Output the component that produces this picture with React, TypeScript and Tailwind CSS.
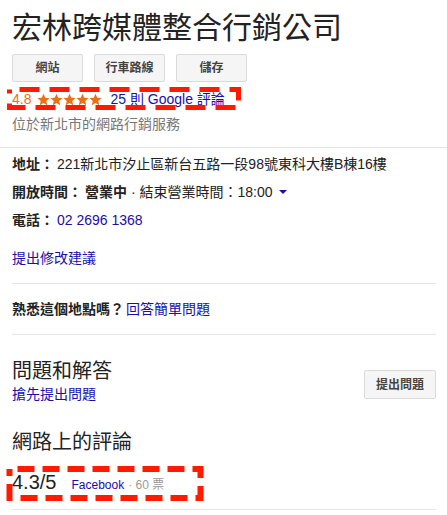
import React from "react";

const FONT = '"Liberation Sans", Arial, "Noto Sans CJK TC", sans-serif';

function Star() {
  return (
    <svg width="13" height="13" viewBox="0 0 24 24" className="inline-block">
      <path
        fill="#e7711b"
        d="M12 1.2l3.2 7.4 8 .7-6.1 5.3 1.8 7.9L12 18.4 5.1 22.5l1.8-7.9L.8 9.3l8-.7z"
      />
    </svg>
  );
}

function Btn({ label }: { label: string }) {
  return (
    <div className="flex h-[28px] w-[71px] items-center justify-center rounded-[2px] border border-[#dadada] bg-[#f5f5f5] text-[12px] font-bold text-[#444]">
      {label}
    </div>
  );
}

export default function App() {
  return (
    <div className="relative h-[515px] w-[447px] overflow-hidden bg-white text-[#222]" style={{ fontFamily: FONT }}>
      <div className="pl-[12px] pr-[11px]">
        {/* title */}
        <div className="mt-[8px] flex h-[40px] items-center text-[30px] leading-[30px] text-[#222]">
          宏林跨媒體整合行銷公司
        </div>
        {/* buttons */}
        <div className="mt-[6px] flex gap-[11px]">
          <Btn label="網站" />
          <Btn label="行車路線" />
          <Btn label="儲存" />
        </div>
        {/* rating */}
        <div className="mt-[7px] flex h-[20px] items-center text-[14px]">
          <span className="text-[#e7711b]">4.8</span>
          <span className="ml-[6px] flex">
            <Star />
            <Star />
            <Star />
            <Star />
            <Star />
          </span>
          <span className="ml-[8px] text-[#1a0dab]">25 則 Google 評論</span>
        </div>
        <div className="mt-[5px] flex h-[20px] items-center text-[14px] text-[#777]">
          位於新北市的網路行銷服務
        </div>
      </div>
      <div className="mt-[13px] border-t border-[#e6e6e6]" />
      <div className="pl-[12px] pr-[11px]">
        <div className="mt-[2px] flex h-[28px] items-center text-[14px]">
          <span className="font-bold">地址：</span>
          <span className="ml-[3px]">221新北市汐止區新台五路一段98號東科大樓B棟16樓</span>
        </div>
        <div className="flex h-[28px] items-center text-[14px]">
          <span className="font-bold">開放時間：</span>
          <span className="ml-[3px] font-bold">營業中</span>
          <span className="ml-[4px]">· 結束營業時間：18:00</span>
          <svg width="10" height="6" viewBox="0 0 10 6" className="ml-[5px]">
            <path d="M1 1h8L5 5z" fill="#1a0dab" />
          </svg>
        </div>
        <div className="flex h-[28px] items-center text-[14px]">
          <span className="font-bold">電話：</span>
          <span className="ml-[3px] text-[#1a0dab]">02 2696 1368</span>
        </div>
        <div className="mt-[14px] flex h-[20px] items-center text-[14px] text-[#1a0dab]">提出修改建議</div>
        <div className="mt-[15px] border-t border-[#e6e6e6]" />
        <div className="mt-[15px] flex h-[20px] items-center text-[14px]">
          <span className="font-bold">熟悉這個地點嗎？</span>
          <span className="ml-[2px] text-[#1a0dab]">回答簡單問題</span>
        </div>
        <div className="mt-[15px] border-t border-[#e6e6e6]" />
        <div className="mt-[23px] flex items-start justify-between">
          <div>
            <div className="flex h-[26px] items-center text-[20px]">問題和解答</div>
            <div className="flex h-[20px] items-center text-[14px] text-[#1a0dab]">搶先提出問題</div>
          </div>
          <div className="mt-[12px] flex h-[29px] w-[72px] items-center justify-center rounded-[2px] border border-[#dadada] bg-[#f5f5f5] text-[12px] font-bold text-[#444]">
            提出問題
          </div>
        </div>
        <div className="mt-[25px] flex h-[26px] items-center text-[20px]">網路上的評論</div>
        <div className="mt-[13px] flex h-[28px] items-baseline pt-[4px]">
          <span className="text-[20px] leading-[20px] text-[#222]">4.3/5</span>
          <span className="ml-[15px] text-[12px] text-[#1a0dab]">Facebook</span>
          <span className="ml-[4px] text-[12px] text-[#999]">· 60 票</span>
        </div>
        <div className="mt-[13px] border-t border-[#e6e6e6]" />
      </div>

      {/* annotation boxes */}
      <svg className="pointer-events-none absolute left-0 top-0" width="447" height="515">
        <rect x="9.5" y="89.5" width="229" height="18" fill="none" stroke="#ff1a00" strokeWidth="5" strokeDasharray="20 10" strokeDashoffset="20" />
        <rect x="9.5" y="469" width="191" height="29" fill="none" stroke="#ff1a00" strokeWidth="6" strokeDasharray="17 8" strokeDashoffset="17" />
      </svg>
    </div>
  );
}
